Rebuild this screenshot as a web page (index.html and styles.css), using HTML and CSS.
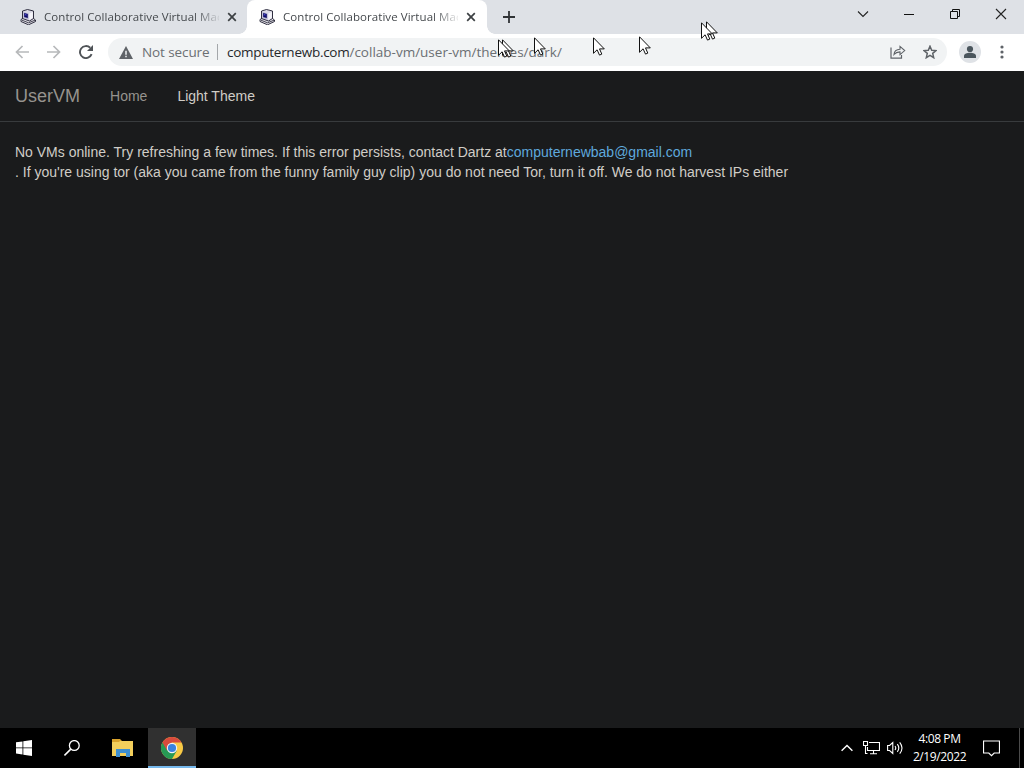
FILE: index.html
```html
<!DOCTYPE html>
<html lang="en">
<head>
    <meta charset="UTF-8">
    <meta name="viewport" content="width=device-width, initial-scale=1.0">
    <title>Control Collaborative Virtual Machines</title>
    <link rel="stylesheet" href="styles.css">
</head>
<body>
    <!-- Shared shapes -->
    <svg class="defs" width="0" height="0">
        <symbol id="computer" viewBox="0 0 16 16">
            <path d="M1 10.500L3.500 9l10 .5 2 1.500v1.500L8.500 15.800 1 12.500z" fill="#e4e3ea" stroke="#1c1b2c" stroke-width=".9"/>
            <path d="M2.500 2l5-1.500 6 1.500v7.500L9.500 12l-7-2.500z" fill="#d9d8e4" stroke="#1c1b2c" stroke-width=".9"/>
            <path d="M3.500 3l5 1.500v6L3.500 8.800z" fill="#b3b1cf"/>
            <path d="M4.200 3.900l3.600 1.200v4L4.200 8z" fill="#0d0b66"/>
            <path d="M5 4.800l1.500.5v1.500L5 6.300z" fill="#4744c8"/>
            <path d="M9.300 4.600L12.800 3v6L9.300 11z" fill="#f6f5fa"/>
            <path d="M2 11.200l6.500 2.600 6.500-2.600" fill="none" stroke="#1c1b2c" stroke-width=".8"/>
        </symbol>
        <symbol id="pointer" viewBox="0 0 12 19">
            <path d="M.5.800v15.500l3.600-3.500 2.400 5.300 2.300-1-2.300-5.200h4.800z" fill="#fff" stroke="#111" stroke-width="1"/>
        </symbol>
        <symbol id="cross" viewBox="0 0 10 10">
            <path d="M1.200 1.200l7.600 7.600M8.800 1.200L1.200 8.800" fill="none" stroke="#3c4043" stroke-width="1.700"/>
        </symbol>
    </svg>

    <div class="tab-strip">
        <div class="tab">
            <svg class="favicon"><use href="#computer"/></svg>
            <span class="tab-title">Control Collaborative Virtual Mac</span>
            <svg class="tab-close"><use href="#cross"/></svg>
        </div>
        <div class="tab active">
            <svg class="favicon"><use href="#computer"/></svg>
            <span class="tab-title">Control Collaborative Virtual Mac</span>
            <svg class="tab-close"><use href="#cross"/></svg>
        </div>
        <svg class="new-tab" width="12" height="12" viewBox="0 0 12 12"><path d="M6 0v12M0 6h12" stroke="#303336" stroke-width="1.800"/></svg>
        <div class="window-buttons">
            <svg viewBox="0 0 46 28"><path d="M18 11.500l5 5 5-5" fill="none" stroke="#222" stroke-width="1.100"/></svg>
            <svg viewBox="0 0 46 28"><path d="M18 14.500h10" stroke="#111"/></svg>
            <svg viewBox="0 0 46 28"><path d="M18.500 11.500h7v7h-7zM20.500 11.500v-2h7v7h-2" fill="none" stroke="#111"/></svg>
            <svg viewBox="0 0 46 28"><path d="M18 9l10 10M28 9L18 19" fill="none" stroke="#222" stroke-width="1.100"/></svg>
        </div>
    </div>

    <div class="toolbar">
        <div class="nav-buttons">
            <svg width="14" height="14" viewBox="0 0 14 14"><path d="M14 7H1.500M7.500 1L1.500 7l6 6" fill="none" stroke="#b7b9bb" stroke-width="1.700"/></svg>
            <svg width="14" height="14" viewBox="0 0 14 14"><path d="M0 7h12.500M6.500 1l6 6-6 6" fill="none" stroke="#b7b9bb" stroke-width="1.700"/></svg>
            <svg width="14" height="14" viewBox="0 0 14 14"><path d="M12.600 9.200A6 6 0 1 1 11.200 2.800" fill="none" stroke="#4f5357" stroke-width="1.900"/><path d="M14 0v6H8z" fill="#4f5357"/></svg>
        </div>
        <div class="address-bar">
            <svg class="warning" width="14" height="13" viewBox="0 0 14 13"><path d="M7 0l7 13H0z" fill="#5f6368"/><path d="M7 4.700v4M7 9.800v1.500" stroke="#f1f3f4" stroke-width="1.500"/></svg>
            <span class="security">Not secure</span>
            <span class="divider"></span>
            <span class="url"><b>computernewb.com</b>/collab-vm/user-vm/themes/dark/</span>
            <svg class="share" width="16" height="14" viewBox="0 0 16 14"><path d="M1 2.500v10.700h10.500V10" fill="none" stroke="#5f6368" stroke-width="1.200"/><path d="M4 9.500c.3-3.500 2.300-5 6-5.200V1.400l4.700 4.200L10 9.600V6.900C7.300 7 5.500 7.700 4 9.500z" fill="none" stroke="#5f6368" stroke-width="1.100"/></svg>
            <svg class="star" width="14" height="14" viewBox="0 0 14 14"><path d="M7 1.200l1.700 4 4.300.4-3.300 2.800 1 4.300L7 10.400l-3.700 2.300 1-4.300L1 5.600l4.300-.4z" fill="none" stroke="#5f6368" stroke-width="1.500"/></svg>
        </div>
        <svg class="profile" width="22" height="22" viewBox="0 0 22 22"><circle cx="11" cy="11" r="11" fill="#dfe2e6"/><circle cx="11" cy="8" r="3.100" fill="#4b565d"/><path d="M5 17v-2c0-2 3-3.200 6-3.200s6 1.200 6 3.200v2z" fill="#4b565d"/></svg>
        <svg class="menu" width="4" height="14" viewBox="0 0 4 14"><g fill="#5f6368"><circle cx="2" cy="2" r="1.600"/><circle cx="2" cy="7" r="1.600"/><circle cx="2" cy="12" r="1.600"/></g></svg>
    </div>

    <main class="page">
        <nav class="navbar">
            <a class="brand" href="#">UserVM</a>
            <a href="#">Home</a>
            <a class="current" href="#">Light Theme</a>
        </nav>
        <div class="content">
            No VMs online. Try refreshing a few times. If this error persists, contact Dartz at<a href="#">computernewbab@gmail.com</a><br>
            . If you're using tor (aka you came from the funny family guy clip) you do not need Tor, turn it off. We do not harvest IPs either
        </div>
    </main>

    <footer class="taskbar">
        <div class="task">
            <svg width="16" height="16" viewBox="0 0 16 16"><path d="M0 2.300L6.500 1.400v6.100H0zM7.300 1.300L16 0v7.500H7.300zM0 8.300h6.500v6.200L0 13.600zM7.300 8.300H16V16l-8.700-1.300z" fill="#fff"/></svg>
        </div>
        <div class="task">
            <svg width="16" height="16" viewBox="0 0 16 16"><circle cx="10.300" cy="5.500" r="4.900" fill="none" stroke="#fff" stroke-width="1.300"/><path d="M6.800 9.100L.5 15.400" stroke="#fff" stroke-width="1.500"/></svg>
        </div>
        <div class="task explorer">
            <svg width="22" height="18" viewBox="0 0 22 18"><path d="M0 0h8l2 2h11v3H0z" fill="#d9a32c"/><path d="M0 3h7l1-1h13v15H0z" fill="#f3cf5c"/><path d="M4 10h14v8h-4v-4H8v4H4z" fill="#3e8fd0"/><path d="M8 14h6v3H8z" fill="#f3cf5c"/></svg>
        </div>
        <div class="task open">
            <svg width="22" height="22" viewBox="0 0 22 22"><circle cx="11" cy="11" r="11" fill="#f8c945"/><path d="M11 11L1.470 5.500A11 11 0 0 0 11 22l4.800-8.300z" fill="#279a55"/><path d="M1.470 5.500A11 11 0 0 1 20.530 5.500H11L6.200 13.700z" fill="#d94b3d"/><circle cx="11" cy="11" r="5.200" fill="#f4f4f4"/><circle cx="11" cy="11" r="4.100" fill="#3b82df"/></svg>
        </div>
        <div class="tray">
            <svg class="chevron" width="12" height="8" viewBox="0 0 12 8"><path d="M.6 6.800L6 1.400l5.400 5.400" fill="none" stroke="#fff" stroke-width="1.400"/></svg>
            <svg class="network" width="17" height="14" viewBox="0 0 17 14"><path d="M6 1.500h10.500v8H4.500V6M10.500 9.500v3M7 12.800h7M.5.500h4v4h-4zM2.500 4.500v8h2" fill="none" stroke="#fff" stroke-width="1.100"/></svg>
            <svg class="volume" width="17" height="14" viewBox="0 0 17 14"><path d="M.6 4.500h2l3.200-3v11l-3.200-3h-2z" fill="none" stroke="#fff" stroke-width="1.100"/><path d="M8 5q1.500 2 0 4M10.300 3.200q3 3.800 0 7.600M12.700 1.300q4.600 5.700 0 11.400" fill="none" stroke="#fff" stroke-width="1.100"/></svg>
            <div class="clock"><span>4:08 PM</span><span>2/19/2022</span></div>
            <svg class="notice" width="17" height="17" viewBox="0 0 17 17"><path d="M.5 1h16v12h-5.300l-2.700 2.700L5.800 13H.5z" fill="none" stroke="#fff" stroke-width="1.200"/></svg>
        </div>
    </footer>

    <svg class="cursor c1"><use href="#pointer"/></svg>
    <svg class="cursor c2"><use href="#pointer"/></svg>
    <svg class="cursor c3"><use href="#pointer"/></svg>
    <svg class="cursor c4"><use href="#pointer"/></svg>
    <svg class="cursor c5"><use href="#pointer"/></svg>
    <svg class="cursor c6"><use href="#pointer"/></svg>
    <svg class="cursor c7"><use href="#pointer"/></svg>
</body>
</html>
```
FILE: styles.css
```css
* {
    box-sizing: border-box;
}
body {
    margin: 0;
    height: 768px;
    display: flex;
    flex-direction: column;
    overflow: hidden;
    position: relative;
    background: #1a1b1c;
    font-family: "Open Sans", "Noto Sans", sans-serif;
}
svg {
    display: block;
    flex: none;
}
a {
    text-decoration: none;
}
.defs {
    position: absolute;
}

/* Tabs */
.tab-strip {
    height: 34px;
    flex: none;
    display: flex;
    align-items: center;
    padding-left: 8px;
    background: #dee1e6;
}
.tab {
    width: 239px;
    height: 34px;
    display: flex;
    align-items: center;
    padding: 0 10px 0 12px;
    border-radius: 8px 8px 0 0;
    position: relative;
}
.tab.active {
    width: 240px;
    background: #fff;
}
.tab.active::before, .tab.active::after {
    content: "";
    position: absolute;
    bottom: 0;
    width: 8px;
    height: 8px;
}
.tab.active::before {
    left: -8px;
    background: radial-gradient(circle at 0 0, transparent 7.5px, #fff 8px);
}
.tab.active::after {
    right: -8px;
    background: radial-gradient(circle at 100% 0, transparent 7.5px, #fff 8px);
}
.favicon {
    width: 16px;
    height: 16px;
}
.tab-title {
    width: 175px;
    margin-left: 8px;
    white-space: nowrap;
    font-size: 11.5px;
    line-height: 18px;
    letter-spacing: 0.06px;
    color: #45494d;
    -webkit-mask-image: linear-gradient(to right, #000 150px, transparent 178px);
    mask-image: linear-gradient(to right, #000 150px, transparent 178px);
}
.tab-close {
    width: 10px;
    height: 10px;
    margin-left: 8px;
}
.new-tab {
    margin-left: 16px;
}
.window-buttons {
    display: flex;
    margin-left: auto;
}
.window-buttons svg {
    width: 46px;
    height: 28px;
    margin-bottom: 6px;
}

/* Toolbar */
.toolbar {
    height: 37px;
    flex: none;
    display: flex;
    align-items: center;
    background: #fff;
    padding: 0 20px 1px 15px;
}
.nav-buttons {
    display: flex;
    gap: 18px;
    width: 93px;
}
.address-bar {
    width: 839px;
    height: 28px;
    display: flex;
    align-items: center;
    padding: 0 10px 0 11px;
    border-radius: 14px;
    background: #f1f3f4;
    font-size: 13.5px;
    line-height: 20px;
    white-space: nowrap;
    color: #6b6f73;
}
.security {
    width: 75px;
    margin-left: 9px;
    letter-spacing: -0.1px;
}
.divider {
    width: 1px;
    height: 16px;
    margin-right: 9px;
    background: #a4a7aa;
}
.url b {
    font-weight: normal;
    letter-spacing: -0.27px;
    color: #26282b;
}
.share {
    margin-left: auto;
}
.star {
    margin-left: 17px;
}
.profile {
    margin-left: 12px;
}
.menu {
    margin-left: auto;
}

/* Page */
.page {
    flex: 1;
    font-family: "Liberation Sans", Arial, sans-serif;
    font-size: 14px;
    line-height: 20px;
    color: #d0cdc7;
}
.navbar {
    height: 51px;
    display: flex;
    border-bottom: 1px solid #383b3d;
}
.navbar a {
    padding: 15px;
    color: #96938e;
}
.navbar .brand {
    font-size: 18px;
}
.navbar .current {
    color: #d0cdc7;
}
.content {
    padding: 20px 15px;
    white-space: nowrap;
}
.content a {
    color: #5fa9dd;
}

/* Taskbar */
.taskbar {
    height: 40px;
    flex: none;
    display: flex;
    background: #000;
    color: #fff;
}
.task {
    width: 48px;
    display: flex;
    align-items: center;
    justify-content: center;
}
.explorer {
    width: 52px;
    padding-left: 2px;
}
.open {
    background: #303030;
    border-bottom: 2px solid #76b9ed;
    padding-top: 1px;
}
.tray {
    flex: 1;
    display: flex;
    align-items: center;
    justify-content: flex-end;
    margin-right: 4px;
    padding-right: 19px;
    border-right: 1px solid #4b4b4b;
}
.network {
    margin-left: 10px;
}
.volume {
    margin-left: 7px;
}
.clock {
    width: 71px;
    display: flex;
    flex-direction: column;
    align-items: center;
    font-size: 12px;
    line-height: 18px;
    letter-spacing: -0.4px;
}
.notice {
    margin-left: 8px;
}

/* Pointers of the connected users */
.cursor {
    position: absolute;
    width: 12px;
    height: 19px;
}
.c1 { left: 502px; top: 39px; }
.c2 { left: 498px; top: 39px; }
.c3 { left: 534px; top: 37px; }
.c4 { left: 593px; top: 37px; }
.c5 { left: 639px; top: 36px; }
.c6 { left: 706px; top: 21px; }
.c7 { left: 701px; top: 22px; }
```
